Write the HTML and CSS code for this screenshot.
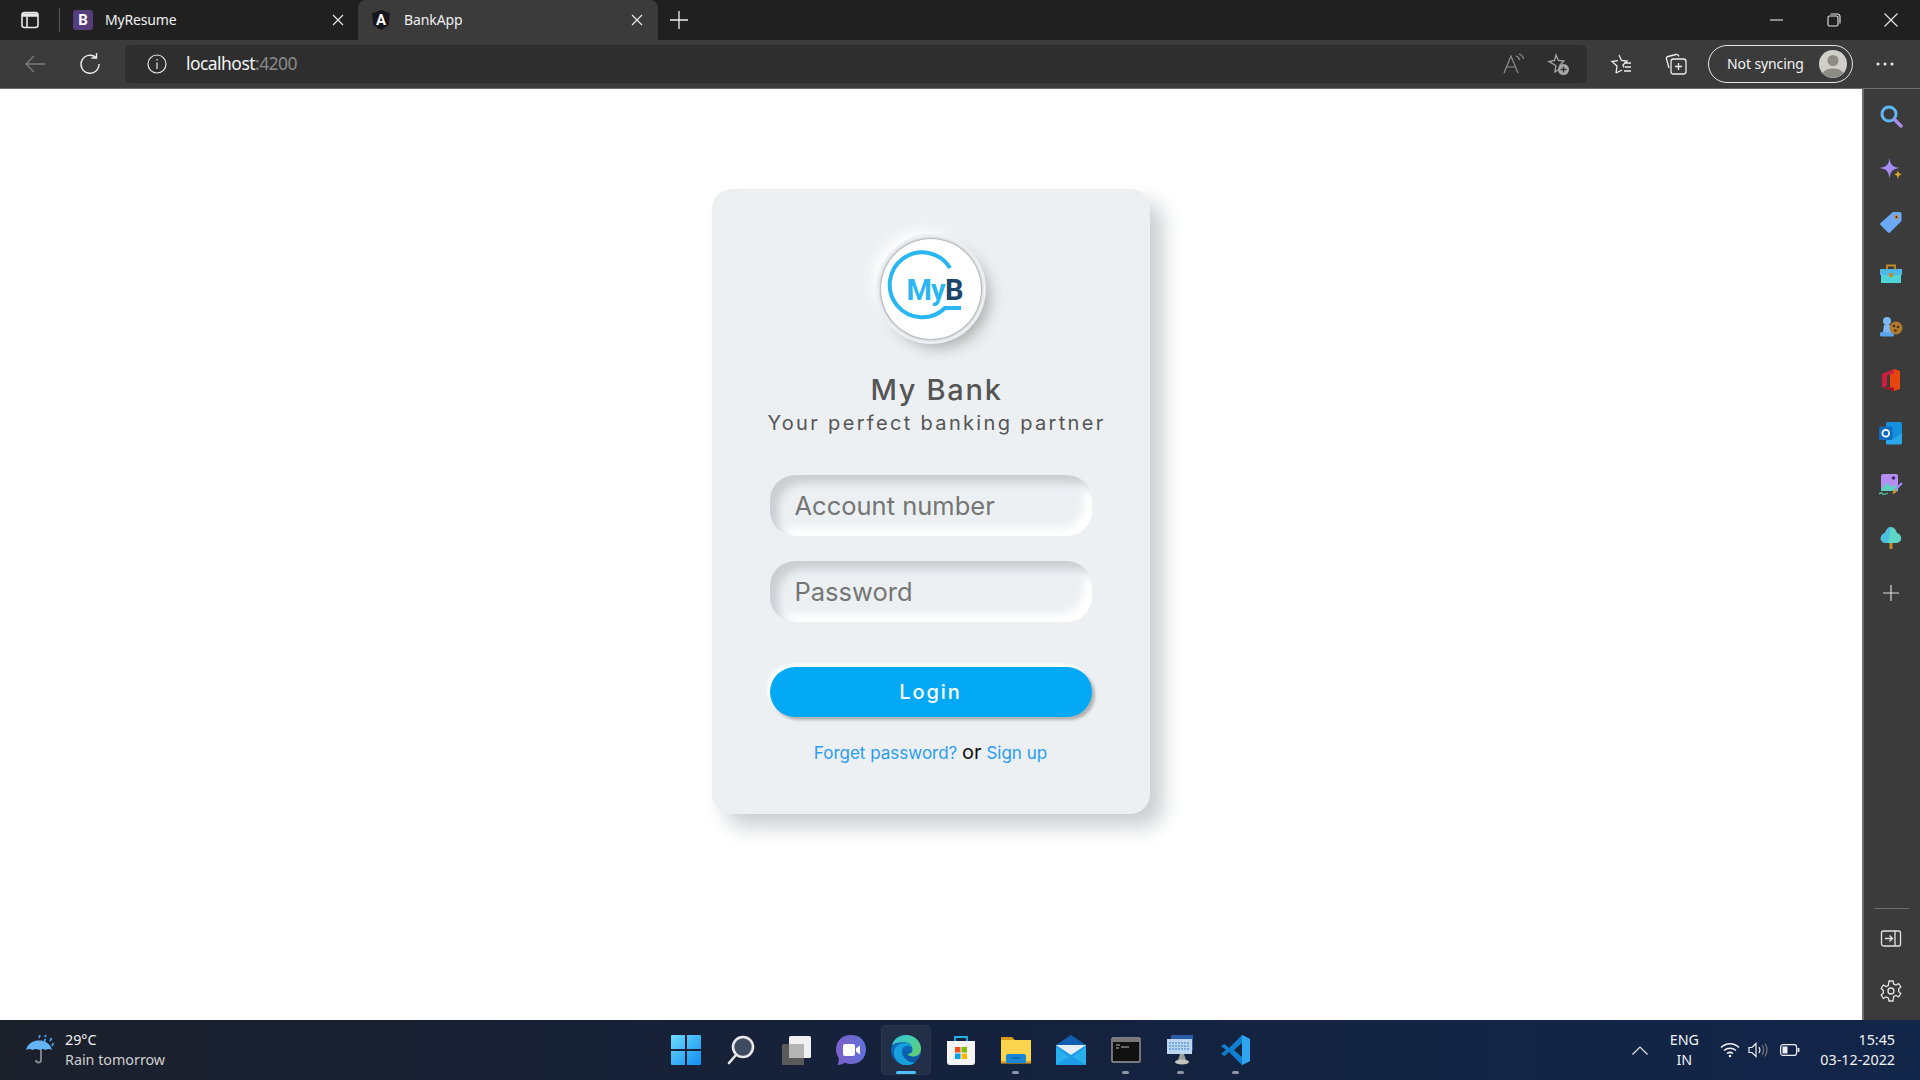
FILE: index.html
```html
<!DOCTYPE html>
<html lang="en">
<head>
<meta charset="utf-8">
<title>BankApp</title>
<link rel="stylesheet" href="styles.css">
</head>
<body>
<div class="tabbar">
  <svg class="ic tab-toggle" viewBox="0 0 20 20" fill="none" stroke="#e8e8e8" stroke-width="1.600"><rect x="2" y="2.500" width="16" height="15" rx="2.500"/><path d="M2 5h16" stroke-width="3.500"/><path d="M7 6.500v11"/></svg>
  <div class="tab-sep"></div>
  <div class="tab tab-plain">
    <svg class="fav" viewBox="0 0 20 20"><rect width="20" height="20" rx="3" fill="#563d7c"/><text x="10" y="15" class="fav-text" text-anchor="middle">B</text></svg>
    <span class="tab-title">MyResume</span>
    <svg class="tab-x" viewBox="0 0 12 12" stroke="#e6e6e6" stroke-width="1.200"><path d="M1 1l10 10M11 1L1 11"/></svg>
  </div>
  <div class="tab tab-active">
    <svg class="fav" viewBox="0 0 20 20"><path d="M10 0L19 3.200 17.700 15 10 20 2.300 15 1 3.200z" fill="#16161c"/><text x="10" y="15" class="fav-text" text-anchor="middle">A</text></svg>
    <span class="tab-title">BankApp</span>
    <svg class="tab-x" viewBox="0 0 12 12" stroke="#e6e6e6" stroke-width="1.200"><path d="M1 1l10 10M11 1L1 11"/></svg>
  </div>
  <svg class="new-tab" viewBox="0 0 18 18" stroke="#f0f0f0" stroke-width="1.300"><path d="M9 0v18M0 9h18"/></svg>
  <div class="win-btns">
    <svg class="ic" viewBox="0 0 14 14" stroke="#e8e8e8" stroke-width="1.100"><path d="M0 7h13"/></svg>
    <svg class="ic" viewBox="0 0 14 14" fill="none" stroke="#e8e8e8" stroke-width="1.100"><rect x="1" y="3" width="10" height="10" rx="1.500"/><path d="M3.500 1h7a2.500 2.500 0 0 1 2.500 2.500v7"/></svg>
    <svg class="ic" viewBox="0 0 14 14" stroke="#e8e8e8" stroke-width="1.100"><path d="M.5.5l13 13M13.500.5l-13 13"/></svg>
  </div>
</div>

<div class="toolbar">
  <svg class="nav-back" viewBox="0 0 22 22" fill="none" stroke="#7c7c7c" stroke-width="1.400"><path d="M21 11H2M10 3l-8 8 8 8"/></svg>
  <svg class="nav-reload" viewBox="0 0 22 22" fill="none" stroke="#ececec" stroke-width="1.400"><path d="M17 4.500A9 9 0 1 0 20 11M17.500 0v5h-5"/></svg>
  <div class="address">
    <svg class="addr-info" viewBox="0 0 20 20" fill="none" stroke="#e6e6e6" stroke-width="1.200"><circle cx="10" cy="10" r="9"/><path d="M10 8.500V15M10 5v1.500"/></svg>
    <span class="addr-host">localhost<span class="addr-port">:4200</span></span>
    <div class="addr-right">
      <svg class="tool-ic" viewBox="0 0 24 24" fill="none" stroke="#8f8f8f" stroke-width="1.200"><path d="M3 21L10 4l7 17M5.500 15h9M15 4c2 .5 3 1.800 3.500 4M18 2c2.500 .7 4 2.500 4.500 5"/></svg>
      <svg class="tool-ic" viewBox="0 0 24 24" fill="none" stroke="#a8a8a8" stroke-width="1.300"><path d="M10 3l2.400 5.400 5.600.6-4 4 1 3.500-3 1.500-3 2 .8-6.500L3 9.500l5.500-1z"/><circle cx="17.500" cy="17.500" r="5.500" fill="#a8a8a8" stroke="none"/><path d="M17.500 14.500v6M14.500 17.500h6" stroke="#333"/></svg>
    </div>
  </div>
  <div class="tools">
    <svg class="tool-ic" viewBox="0 0 24 24" fill="none" stroke="#ededed" stroke-width="1.300"><path d="M10 3l2.500 5.500 5.500.5-4 4 1 2.500M7 21l1-7-5-4.500 6-.9M7 21l6-3M15 11h7M16 15h6M15 19h7"/></svg>
    <svg class="tool-ic" viewBox="0 0 24 24" fill="none" stroke="#ededed" stroke-width="1.300"><rect x="7" y="7" width="15" height="15" rx="2.500"/><path d="M14.500 11v7M11 14.500h7M5 16L2.500 7a2 2 0 0 1 1.500-2.500l8-2c1.500-.3 2.500.5 3 2"/></svg>
    <div class="profile">
      <span class="profile-text">Not syncing</span>
      <svg class="avatar" viewBox="0 0 28 28"><circle cx="14" cy="14" r="14" fill="#d0cfc9"/><circle cx="14" cy="10.500" r="5.500" fill="#8d8b86"/><path d="M3.500 23a12 8.500 0 0 1 21 0A14 14 0 0 1 3.500 23z" fill="#8d8b86"/></svg>
    </div>
    <svg class="more" viewBox="0 0 18 4" fill="#eee"><circle cx="2" cy="2" r="1.500"/><circle cx="9" cy="2" r="1.500"/><circle cx="16" cy="2" r="1.500"/></svg>
  </div>
</div>

<div class="body-row">
  <main class="page">
    <section class="card">
      <div class="logo">
        <svg viewBox="0 0 100 100" class="logo-svg">
          <path d="M69 29A32.500 32.500 0 1 0 64 69H80" fill="none" stroke="#29b6f1" stroke-width="4"/>
          <text x="25.500" y="61" class="logo-text"><tspan class="logo-my">My</tspan><tspan class="logo-b">B</tspan></text>
        </svg>
      </div>
      <h1 class="brand">My Bank</h1>
      <p class="tagline">Your perfect banking partner</p>
      <form class="form">
        <input class="field" type="text" placeholder="Account number">
        <input class="field" type="password" placeholder="Password">
        <button class="login" type="button">Login</button>
      </form>
      <p class="links"><a class="link">Forget password?</a> <span class="or">or</span> <a class="link">Sign up</a></p>
    </section>
  </main>

  <aside class="sidebar">
    <div class="side-top">
      <svg class="side-ic" viewBox="0 0 24 24" fill="none"><circle cx="10" cy="10" r="7" stroke="#5db8f5" stroke-width="3"/><path d="M15.500 15.500L22 22" stroke="#a78bea" stroke-width="3.500" stroke-linecap="round"/></svg>
      <svg class="side-ic" viewBox="0 0 24 24"><path d="M10.500 1c1 7 3 9 10 10-7 1-9 3-10 10.500-1-7.500-3-9.500-10-10.500 7-1 9-3 10-10z" fill="#a48cf5"/><path d="M19 13c.5 3 1.200 3.500 4 4.500-2.800.5-3.500 1.200-4 5-.5-3.800-1.200-4.500-4-5 2.800-1 3.500-1.500 4-4.500z" fill="#e0a526"/></svg>
      <svg class="side-ic" viewBox="0 0 24 24"><path d="M14 2h7a1.500 1.500 0 0 1 1.500 1.500V11L11 22.500a1.500 1.500 0 0 1-2 0L1.500 15a1.500 1.500 0 0 1 0-2z" fill="#6aaaf7"/><circle cx="17.500" cy="7" r="2.200" fill="#e58a1a"/><circle cx="17.500" cy="7" r="1" fill="#3a2a10"/></svg>
      <svg class="side-ic" viewBox="0 0 24 24"><path d="M8 7V3.500h8V7" fill="none" stroke="#c58a2a" stroke-width="1.800"/><rect x="1" y="7" width="22" height="6" fill="#4db8e8"/><rect x="2" y="13" width="20" height="8" fill="#4fd5d8"/><rect x="10" y="11" width="4" height="4" rx="1" fill="#c58a2a"/></svg>
      <svg class="side-ic" viewBox="0 0 24 24"><circle cx="8" cy="6" r="4" fill="#7db8f5"/><path d="M5 10h6l1 7H4z" fill="#7db8f5"/><rect x="1" y="17" width="14" height="4.500" rx="1.500" fill="#5aa5ee"/><circle cx="17" cy="13" r="6.500" fill="#b07a2a"/><circle cx="15" cy="11" r="1.200" fill="#3d2a10"/><circle cx="19" cy="12" r="1.200" fill="#3d2a10"/><circle cx="16.500" cy="15.500" r="1.200" fill="#3d2a10"/></svg>
      <svg class="side-ic" viewBox="0 0 24 24"><path d="M15 1l6 2v18l-6 2-12-3.500c3 .5 6 .5 8 0V5L3 7.500z" fill="#e8450f"/><path d="M15 1L3 6v13.500l5-1.500V7.500l7-2z" fill="#cc1f3e"/><path d="M3 19.500L15 23v-3.500z" fill="#a8102a"/></svg>
      <svg class="side-ic" viewBox="0 0 24 24"><rect x="7" y="1" width="16" height="22" rx="1.500" fill="#1490df"/><path d="M7 12l8 6 8-6v10a1.500 1.500 0 0 1-1.500 1.500H8.500A1.500 1.500 0 0 1 7 22z" fill="#28a8ea"/><rect x="0" y="5.500" width="13.500" height="13.500" rx="1.500" fill="#0f6cbd"/><circle cx="6.800" cy="12.300" r="3.400" fill="none" stroke="#fff" stroke-width="1.800"/></svg>
      <svg class="side-ic" viewBox="0 0 24 24"><rect x="2" y="1" width="17" height="17" rx="2" fill="#b48ff0"/><path d="M2 16l6-6 5 4 3-2 3 3v3H2z" fill="#5fd0c0"/><circle cx="14.500" cy="5" r="1.800" fill="#402a70"/><path d="M23 10l-8 8" stroke="#a48cf5" stroke-width="2.200"/><path d="M15.500 16l2.500 2.500-3.500 2.500-1-1z" fill="#d89a2a"/><path d="M0 21c2-2 3-1 4 0s3 0 5-1" fill="none" stroke="#50c8a8" stroke-width="1.300"/></svg>
      <svg class="side-ic" viewBox="0 0 24 24"><path d="M12 1c3 0 5 3 6 6 3 1 5 4 4 7-1 2-3 3-5 3H7c-2 0-4-1-5-3-1-3 1-6 4-7 1-3 3-6 6-6z" fill="#5fd6c6"/><path d="M12 1c-3 0-5 3-6 6-3 1-5 4-4 7 1 2 3 3 5 3h2z" fill="#4cc0e0"/><rect x="10.500" y="17" width="3" height="6" fill="#c58a2a"/></svg>
      <svg class="side-plus" viewBox="0 0 16 16" stroke="#dadada" stroke-width="1.200"><path d="M8 0v16M0 8h16"/></svg>
    </div>
    <div class="side-bottom">
      <div class="side-line"></div>
      <svg class="side-ic" viewBox="0 0 24 24" fill="none" stroke="#e4e4e4" stroke-width="1.300"><rect x="2.500" y="4" width="19" height="15" rx="2"/><path d="M16 4v15M6 11.500h7M10.500 8.500l3 3-3 3"/></svg>
      <svg class="side-ic" viewBox="0 0 24 24" fill="none" stroke="#e4e4e4" stroke-width="1.300"><circle cx="12" cy="12" r="3"/><path d="M10 2h4l.7 3 2.200 1 2.700-1.500 2.200 3.500-2.200 2 .1 2.500 2.100 2-2.200 3.500-2.700-1.500-2.200 1L14 22h-4l-.7-3-2.200-1-2.700 1.500L2.200 16l2.200-2-.1-2.500L2.200 9.500 4.400 6l2.700 1.500 2.200-1z"/></svg>
    </div>
  </aside>
</div>

<footer class="taskbar">
  <div class="weather">
    <svg class="weather-ic" viewBox="0 0 32 32"><path d="M16 14v12a2.500 2.500 0 0 1-5 0" fill="none" stroke="#8a8a8a" stroke-width="1.800"/><path d="M1 16C3 9 8 6.500 14 6.500S25 9 27 16c-2-1.500-4-1.500-6.500 0-2-1.500-4.500-1.500-6.500 0-2-1.500-4.500-1.500-6.500 0C5 14.500 3 14.500 1 16z" fill="#62b4f5"/><path d="M14 4l1-3M20 3l1-2M19 8l1.500-3M25 7l1.500-3M27 12l1.500-3" stroke="#4a9fe8" stroke-width="1.800"/></svg>
    <div class="weather-text">
      <span class="temp">29°C</span>
      <span class="forecast">Rain tomorrow</span>
    </div>
  </div>

  <div class="apps">
    <div class="app">
      <svg class="app-ic" viewBox="0 0 30 30"><defs><linearGradient id="win" x1="0" y1="0" x2="1" y2="1"><stop offset="0" stop-color="#6fdcff"/><stop offset="1" stop-color="#0f8cf0"/></linearGradient></defs><path d="M0 1a1 1 0 0 1 1-1h13v14H0zM16 0h13a1 1 0 0 1 1 1v13H16zM0 16h14v14H1a1 1 0 0 1-1-1zM16 16h14v13a1 1 0 0 1-1 1H16z" fill="url(#win)"/></svg>
    </div>
    <div class="app">
      <svg class="app-ic" viewBox="0 0 30 30" fill="#3e4b60" stroke="#e8e8e8" stroke-width="2.600"><circle cx="17" cy="12" r="10"/><path d="M10 20l-7 8" stroke-linecap="round"/></svg>
    </div>
    <div class="app">
      <svg class="app-ic" viewBox="0 0 30 30"><rect x="8" y="1" width="22" height="22" rx="1.500" fill="#f0f0f0"/><rect x="1" y="9" width="22" height="22" rx="1.500" fill="#5a5a5a"/><rect x="8" y="9" width="15" height="14" fill="#b4b4b4"/></svg>
    </div>
    <div class="app">
      <svg class="app-ic" viewBox="0 0 30 30"><defs><linearGradient id="chat" x1="0" y1="0" x2="1" y2="0"><stop offset="0" stop-color="#7b5fc8"/><stop offset="1" stop-color="#6070d8"/></linearGradient></defs><path d="M15 0c9 0 15 6 15 14.500S24 29 15 29c-2 0-4-.3-6-1.200C7 29 4.500 30 1.500 30c1-2 1.500-4.500 1.300-7C1 20.500 0 18 0 14.500 0 6 6 0 15 0z" fill="url(#chat)"/><rect x="7" y="9" width="12" height="12" rx="2" fill="#fff"/><path d="M20 13.500l4-3v9l-4-3z" fill="#fff"/></svg>
    </div>
    <div class="app app-active">
      <svg class="app-ic" viewBox="0 0 30 30"><defs><linearGradient id="edgeA" x1="0" y1="0" x2="1" y2="1"><stop offset="0" stop-color="#30c8e0"/><stop offset="1" stop-color="#66d068"/></linearGradient><linearGradient id="edgeB" x1="0" y1="0" x2="0" y2="1"><stop offset="0" stop-color="#0f7cc8"/><stop offset="1" stop-color="#0b4f9e"/></linearGradient></defs><circle cx="15" cy="15" r="15" fill="url(#edgeB)"/><path d="M1 10C3 3.500 9 0 15 0c9 0 15 6.500 15 14 0 5-4 7.500-8 7.500-2.500 0-5-1-5.500-2.500 4 0 5-2.500 5-4C21.500 10.500 18 7 13.500 7 8 7 3.500 8 1 10z" fill="url(#edgeA)"/><path d="M12 30C6 28 2 22 3 16c1-5 6-8 11-8 3 0 6 1.500 7 4-3-2-9-2-10 3-1 5 3 10 9 12 2 .7 4 .5 5 .2-3 2-8 4-13 3z" fill="#16a0dc"/></svg>
    </div>
    <div class="app">
      <svg class="app-ic" viewBox="0 0 30 30"><path d="M9 7V2h12v5" fill="none" stroke="#25b0e8" stroke-width="1.800"/><path d="M1 6h28v21a3 3 0 0 1-3 3H4a3 3 0 0 1-3-3z" fill="#f4f4f4"/><rect x="9" y="12" width="5.500" height="5.500" fill="#f25022"/><rect x="15.500" y="12" width="5.500" height="5.500" fill="#7fba00"/><rect x="9" y="18.500" width="5.500" height="5.500" fill="#00a4ef"/><rect x="15.500" y="18.500" width="5.500" height="5.500" fill="#ffb900"/></svg>
    </div>
    <div class="app app-running">
      <svg class="app-ic" viewBox="0 0 30 30"><path d="M0 2h11l3 3h16v5H0z" fill="#d89a10"/><rect x="0" y="5" width="30" height="23" fill="#fbd44d"/><rect x="0" y="26" width="30" height="2.500" fill="#e0a818"/><path d="M5 21a2 2 0 0 1 2-2h16a2 2 0 0 1 2 2v7H5z" fill="#1a86d8"/><path d="M11 23h8" stroke="#0d5aa8" stroke-width="1.200"/></svg>
    </div>
    <div class="app">
      <svg class="app-ic" viewBox="0 0 30 30"><path d="M0 10L15 0l15 10v4H0z" fill="#0e5fb0"/><rect x="0" y="10" width="30" height="20" fill="#1e9be8"/><path d="M0 10h30L15 20z" fill="#e8eef5"/><path d="M0 30V12l13 10zM30 30V12L17 22z" fill="#28b0ec"/></svg>
    </div>
    <div class="app app-running">
      <svg class="app-ic" viewBox="0 0 30 30"><rect x="1" y="3" width="28" height="24" rx="1" fill="#111" stroke="#9a9a9a" stroke-width="1.400"/><rect x="2" y="4" width="26" height="3" fill="#777"/><path d="M5 10h4M10 12h8M5 13h3" stroke="#bbb" stroke-width="1"/></svg>
    </div>
    <div class="app app-running">
      <svg class="app-ic" viewBox="0 0 30 30"><rect x="5" y="0" width="22" height="16" fill="#2a5ba8"/><rect x="1" y="4" width="25" height="15" fill="#bcd6ee"/><path d="M3 8h21M3 11h21M3 14h21" stroke="#5c9ad8" stroke-width="1.300" stroke-dasharray="2 1"/><path d="M14 19l-2 6h8l-2-6z" fill="#9aa0a0"/><ellipse cx="16" cy="27" rx="7" ry="2.500" fill="#c4c4c0"/></svg>
    </div>
    <div class="app app-running">
      <svg class="app-ic" viewBox="0 0 30 30"><path d="M21 0l8 4v22l-8 4L8 17l-4.500 4L0 19l5-4-5-4 3.500-2L8 13z" fill="#0f7fd0"/><path d="M21 0l8 4v22l-8 4z" fill="#2ea5ee"/><path d="M21 8l-8 7 8 7z" fill="#14253f"/></svg>
    </div>
  </div>

  <div class="tray">
    <svg class="tray-chev" viewBox="0 0 16 9" fill="none" stroke="#e8e8e8" stroke-width="1.200"><path d="M.5 8.500L8 1l7.500 7.500"/></svg>
    <div class="lang"><span>ENG</span><span>IN</span></div>
    <svg class="tray-wifi" viewBox="0 0 20 16" fill="none" stroke="#f0f0f0" stroke-width="1.500"><path d="M1 5.500c5-5 13-5 18 0M4 8.500c3.500-3 8.500-3 12 0M7 11.500c2-1.500 4-1.500 6 0"/><circle cx="10" cy="14" r="1.300" fill="#f0f0f0" stroke="none"/></svg>
    <svg class="tray-vol" viewBox="0 0 20 16" fill="none" stroke="#eee" stroke-width="1.200"><path d="M1 5.500h3l4-4v13l-4-4H1z"/><path d="M11 5c1.200 2 1.200 4 0 6"/><path d="M14 3c2 3 2 7 0 10M17 1.500c2.500 4 2.500 9 0 13" stroke="#777"/></svg>
    <svg class="tray-bat" viewBox="0 0 20 12" fill="none" stroke="#eee" stroke-width="1.200"><rect x=".6" y=".6" width="16" height="10.800" rx="2.500"/><rect x="2.500" y="2.500" width="5" height="7" fill="#eee" stroke="none"/><path d="M18.500 4v4" stroke-width="1.800"/></svg>
    <div class="clock"><span>15:45</span><span>03-12-2022</span></div>
  </div>
</footer>
</body>
</html>
```

FILE: styles.css
```css
* { box-sizing: border-box; }
html, body { margin: 0; padding: 0; }
body {
  width: 1920px;
  height: 1080px;
  overflow: hidden;
  display: flex;
  flex-direction: column;
  background: #fff;
  font-family: "Noto Sans", "Open Sans", sans-serif;
}
.ic { width: 14px; height: 14px; display: block; }

/* tab strip */
.tabbar {
  height: 40px;
  flex: none;
  display: flex;
  align-items: center;
  background: #202020;
  color: #f0f0f0;
  font-size: 14px;
}
.tab-toggle { width: 20px; height: 20px; margin-left: 20px; }
.tab-sep { width: 1px; height: 24px; background: #5a5a5a; margin: 0 13px 0 19px; }
.tab {
  height: 40px;
  display: flex;
  align-items: center;
  width: 285px;
}
.tab-plain { width: 285px; }
.tab-active {
  width: 300px;
  background: #3b3b3b;
  border-radius: 8px 8px 0 0;
  padding-left: 13px;
}
.fav { width: 20px; height: 20px; flex: none; }
.fav-text { font: 700 15px "Roboto", sans-serif; fill: #fff; }
.tab-title { margin: 0 0 2px 12px; flex: 1; letter-spacing: -0.170px; }
.tab-active .tab-title { margin-left: 13px; letter-spacing: -0.100px; }
.tab-x { width: 12px; height: 12px; flex: none; margin-right: 15px; }
.tab-plain .tab-x { margin-right: 14px; }
.new-tab { width: 18px; height: 18px; margin-left: 12px; flex: none; }
.win-btns {
  margin-left: auto;
  width: 128px;
  margin-right: 22px;
  display: flex;
  justify-content: space-between;
}

/* toolbar */
.toolbar {
  height: 49px;
  flex: none;
  display: flex;
  align-items: center;
  background: #3b3b3b;
  border-bottom: 1px solid #6d6d6d;
}
.nav-back { width: 22px; height: 22px; margin-left: 24px; }
.nav-reload { width: 22px; height: 22px; margin-left: 33px; }
.address {
  width: 1462px;
  height: 38px;
  margin-left: 24px;
  background: #2e2e2e;
  border-radius: 6px;
  display: flex;
  align-items: center;
  padding-left: 22px;
}
.addr-info { width: 20px; height: 20px; flex: none; }
.addr-host { margin: 0 0 2px 19px; font-size: 17.500px; letter-spacing: -0.550px; color: #f2f2f2; }
.addr-port { color: #8a8a8a; }
.addr-right { margin-left: auto; display: flex; gap: 21px; padding-right: 17px; }
.tool-ic { width: 24px; height: 24px; display: block; flex: none; }
.tools { display: flex; align-items: center; margin-left: 22px; gap: 31px; }
.profile {
  width: 145px;
  height: 38px;
  border: 1.500px solid #e8e8e8;
  border-radius: 19px;
  display: flex;
  align-items: center;
  justify-content: space-between;
  padding: 0 5px 0 18px;
  margin-left: -11px;
  color: #f4f4f4;
  font-size: 14px;
}
.profile-text { letter-spacing: -0.100px; margin-bottom: 2px; }
.avatar { width: 28px; height: 28px; }
.more { width: 18px; height: 4px; margin-left: -8px; }

/* body */
.body-row { flex: 1; display: flex; min-height: 0; }
.page {
  flex: 1;
  display: flex;
  justify-content: center;
  padding: 100px 1px 0 0;
  background: #fff;
}
.card {
  width: 438px;
  height: 625px;
  background: #ecf0f3;
  border-radius: 20px;
  box-shadow: 13px 13px 20px #cbced1, -13px -13px 20px #fff;
  display: flex;
  flex-direction: column;
  align-items: center;
  padding: 50px 58px 0;
  font-family: "Inter", "Noto Sans", sans-serif;
}
.logo {
  width: 100px;
  height: 100px;
  flex: none;
  border-radius: 50%;
  background: #fff;
  box-shadow: 0 0 3px #5f5f5f, 0 0 0 5px #ecf0f3, 8px 8px 15px #a7aaa7, -8px -8px 15px #fff;
}
.logo-svg { width: 100px; height: 100px; display: block; }
.logo-text { font: 700 29px "Roboto", sans-serif; letter-spacing: -0.800px; }
.logo-my { fill: #29b6f1; }
.logo-b { fill: #1b4569; }
.brand {
  margin: 31px 0 0 12px;
  font-size: 29px;
  line-height: 40px;
  font-weight: 500;
  letter-spacing: 1.700px;
  color: #555;
  white-space: nowrap;
}
.tagline {
  margin: -1px 0 0 12px;
  font-size: 20px;
  line-height: 28px;
  letter-spacing: 2.330px;
  color: #555;
  white-space: nowrap;
}
.form { width: 100%; display: flex; flex-direction: column; margin-top: 38px; }
.field {
  width: 100%;
  height: 61px;
  border: 0;
  outline: 0;
  border-radius: 25px;
  background: #ecf0f3;
  padding: 0 25px;
  font: 400 25.500px "Inter", "Noto Sans", sans-serif;
  color: #666;
  box-shadow: inset 8px 8px 8px #cbced1, inset -8px -8px 8px #fff;
}
.field::placeholder { color: #757575; opacity: 1; }
.field + .field { margin-top: 25px; }
.login {
  width: 100%;
  height: 50px;
  margin-top: 45px;
  border: 0;
  border-radius: 25px;
  background: #03a9f4;
  color: #fff;
  font: 500 20px "Inter", "Noto Sans", sans-serif;
  letter-spacing: 1.900px;
  box-shadow: 3px 3px 3px #b1b1b1, -3px -3px 3px #fff;
}
.links {
  margin: 22px 0 0;
  font-size: 17px;
  line-height: 26px;
  white-space: nowrap;
  text-align: center;
  width: 100%;
}
.link { color: #2a9df4; }
.or { font-size: 20px; color: #111; }

/* sidebar */
.sidebar {
  width: 58px;
  flex: none;
  background: #3b3b3b;
  border-left: 2px solid #6a6a6a;
  display: flex;
  flex-direction: column;
  justify-content: space-between;
  align-items: center;
  padding: 15px 2px 17px 0;
}
.side-top { display: flex; flex-direction: column; align-items: center; gap: 28.750px; }
.side-ic { width: 24px; height: 24px; display: block; flex: none; }
.side-plus { width: 16px; height: 16px; display: block; margin-top: 6px; }
.side-bottom { display: flex; flex-direction: column; align-items: center; gap: 28px; }
.side-line { width: 35px; height: 1px; background: #6f6f6f; margin-bottom: -10px; }

/* taskbar */
.taskbar {
  height: 60px;
  flex: none;
  display: grid;
  grid-template-columns: 1fr auto 1fr;
  align-items: center;
  background: linear-gradient(90deg, #1b202b 0%, #15223d 50%, #12264a 100%);
  color: #f2f2f2;
  font-size: 14.300px;
  line-height: 20px;
}
.weather { display: flex; align-items: center; padding-left: 25px; }
.weather-ic { width: 32px; height: 32px; flex: none; }
.weather-text { display: flex; flex-direction: column; margin-left: 8px; }
.forecast { color: #cfcfcf; }
.apps { display: flex; align-items: center; margin-left: 1px; }
.app {
  width: 55px;
  height: 50px;
  display: flex;
  align-items: center;
  justify-content: center;
  position: relative;
  border-radius: 5px;
}
.app-ic { width: 30px; height: 30px; display: block; }
.app-active {
  width: 50px;
  margin: 0 2.500px;
  background: rgba(255, 255, 255, 0.06);
  box-shadow: inset 0 0 0 1px rgba(255, 255, 255, 0.04);
}
.app-active::after,
.app-running::after {
  content: "";
  position: absolute;
  bottom: 1px;
  left: 50%;
  width: 7px;
  height: 3px;
  margin-left: -3.500px;
  border-radius: 2px;
  background: #8d96a5;
}
.app-active::after { width: 20px; margin-left: -10px; background: #4cc2ff; }
.tray { display: flex; align-items: center; justify-self: end; padding-right: 25px; }
.tray-chev { width: 16px; height: 9px; flex: none; }
.lang { display: flex; flex-direction: column; align-items: center; width: 32px; margin-left: 20px; }
.tray-wifi { width: 20px; height: 16px; margin-left: 19.500px; }
.tray-vol { width: 20px; height: 16px; margin-left: 8.500px; }
.tray-bat { width: 20px; height: 12px; margin-left: 12px; }
.clock { display: flex; flex-direction: column; align-items: flex-end; margin-left: 20px; }
```
